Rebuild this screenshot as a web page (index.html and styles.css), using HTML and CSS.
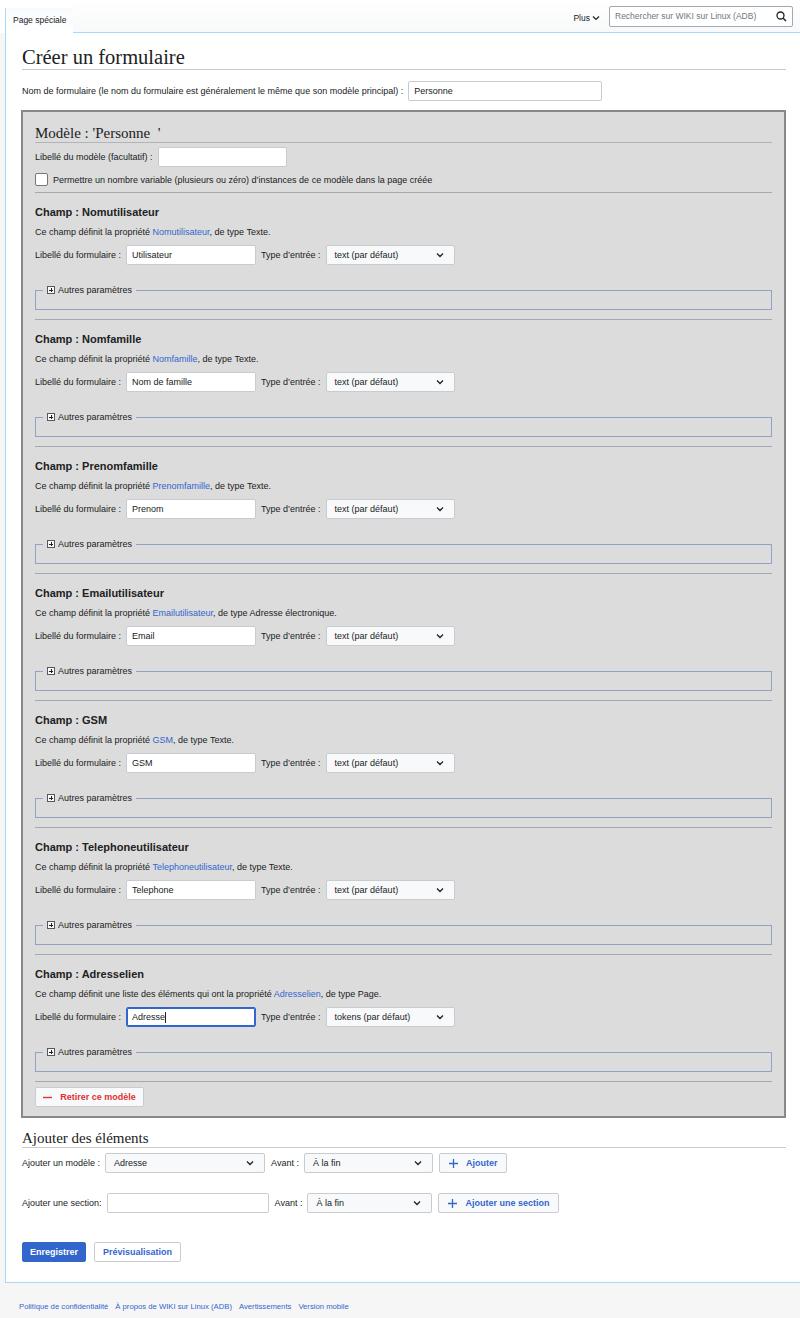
FILE: index.html
```html
<!DOCTYPE html>
<html lang="fr">
<head>
	<meta charset="UTF-8">
	<title>Créer un formulaire</title>
	<link rel="stylesheet" href="styles.css">
</head>
<body>
	<div class="head">
		<div class="tab">Page spéciale</div>
		<div class="head-rest">
			<span class="more">Plus <svg width="8" height="6" viewBox="0 0 8 6"><path d="M1 1.5 L4 4.5 L7 1.5" fill="none" stroke="#202122" stroke-width="1.2"/></svg></span>
			<div class="search">
				<span>Rechercher sur WIKI sur Linux (ADB)</span>
				<svg width="11" height="11" viewBox="0 0 11 11"><circle cx="4.5" cy="4.5" r="3.5" fill="none" stroke="#202122" stroke-width="1.3"/><path d="M7 7 L10 10" stroke="#202122" stroke-width="1.4"/></svg>
			</div>
		</div>
	</div>

	<div class="content">
		<h1>Créer un formulaire</h1>
		<div class="row form-name">
			<span>Nom de formulaire (le nom du formulaire est généralement le même que son modèle principal) :</span>
			<input type="text" class="ipt w-name" value="Personne">
		</div>

		<div class="tpl-box">
			<h2>Modèle : 'Personne&nbsp;&nbsp;'</h2>
			<div class="row tpl-label">
				<span>Libellé du modèle (facultatif) :</span>
				<input type="text" class="ipt w-tpl" value="">
			</div>
			<div class="row check-row">
				<span class="check"></span>
				<span>Permettre un nombre variable (plusieurs ou zéro) d’instances de ce modèle dans la page créée</span>
			</div>
			<hr>

			<div class="field">
				<h3>Champ : Nomutilisateur</h3>
				<p class="desc">Ce champ définit la propriété <a href="#">Nomutilisateur</a>, de type Texte.</p>
				<div class="row">
					<span>Libellé du formulaire :</span>
					<input type="text" class="ipt w-label" value="Utilisateur">
					<span class="type-label">Type d’entrée :</span>
					<div class="select w-type"><span>text (par défaut)</span><svg width="8" height="6" viewBox="0 0 8 6"><path d="M1 1.5 L4 4.5 L7 1.5" fill="none" stroke="#202122" stroke-width="1.3"/></svg></div>
				</div>
				<fieldset><legend><span class="plus"></span>Autres paramètres</legend></fieldset>
			</div>
			<hr>

			<div class="field">
				<h3>Champ : Nomfamille</h3>
				<p class="desc">Ce champ définit la propriété <a href="#">Nomfamille</a>, de type Texte.</p>
				<div class="row">
					<span>Libellé du formulaire :</span>
					<input type="text" class="ipt w-label" value="Nom de famille">
					<span class="type-label">Type d’entrée :</span>
					<div class="select w-type"><span>text (par défaut)</span><svg width="8" height="6" viewBox="0 0 8 6"><path d="M1 1.5 L4 4.5 L7 1.5" fill="none" stroke="#202122" stroke-width="1.3"/></svg></div>
				</div>
				<fieldset><legend><span class="plus"></span>Autres paramètres</legend></fieldset>
			</div>
			<hr>

			<div class="field">
				<h3>Champ : Prenomfamille</h3>
				<p class="desc">Ce champ définit la propriété <a href="#">Prenomfamille</a>, de type Texte.</p>
				<div class="row">
					<span>Libellé du formulaire :</span>
					<input type="text" class="ipt w-label" value="Prenom">
					<span class="type-label">Type d’entrée :</span>
					<div class="select w-type"><span>text (par défaut)</span><svg width="8" height="6" viewBox="0 0 8 6"><path d="M1 1.5 L4 4.5 L7 1.5" fill="none" stroke="#202122" stroke-width="1.3"/></svg></div>
				</div>
				<fieldset><legend><span class="plus"></span>Autres paramètres</legend></fieldset>
			</div>
			<hr>

			<div class="field">
				<h3>Champ : Emailutilisateur</h3>
				<p class="desc">Ce champ définit la propriété <a href="#">Emailutilisateur</a>, de type Adresse électronique.</p>
				<div class="row">
					<span>Libellé du formulaire :</span>
					<input type="text" class="ipt w-label" value="Email">
					<span class="type-label">Type d’entrée :</span>
					<div class="select w-type"><span>text (par défaut)</span><svg width="8" height="6" viewBox="0 0 8 6"><path d="M1 1.5 L4 4.5 L7 1.5" fill="none" stroke="#202122" stroke-width="1.3"/></svg></div>
				</div>
				<fieldset><legend><span class="plus"></span>Autres paramètres</legend></fieldset>
			</div>
			<hr>

			<div class="field">
				<h3>Champ : GSM</h3>
				<p class="desc">Ce champ définit la propriété <a href="#">GSM</a>, de type Texte.</p>
				<div class="row">
					<span>Libellé du formulaire :</span>
					<input type="text" class="ipt w-label" value="GSM">
					<span class="type-label">Type d’entrée :</span>
					<div class="select w-type"><span>text (par défaut)</span><svg width="8" height="6" viewBox="0 0 8 6"><path d="M1 1.5 L4 4.5 L7 1.5" fill="none" stroke="#202122" stroke-width="1.3"/></svg></div>
				</div>
				<fieldset><legend><span class="plus"></span>Autres paramètres</legend></fieldset>
			</div>
			<hr>

			<div class="field">
				<h3>Champ : Telephoneutilisateur</h3>
				<p class="desc">Ce champ définit la propriété <a href="#">Telephoneutilisateur</a>, de type Texte.</p>
				<div class="row">
					<span>Libellé du formulaire :</span>
					<input type="text" class="ipt w-label" value="Telephone">
					<span class="type-label">Type d’entrée :</span>
					<div class="select w-type"><span>text (par défaut)</span><svg width="8" height="6" viewBox="0 0 8 6"><path d="M1 1.5 L4 4.5 L7 1.5" fill="none" stroke="#202122" stroke-width="1.3"/></svg></div>
				</div>
				<fieldset><legend><span class="plus"></span>Autres paramètres</legend></fieldset>
			</div>
			<hr>

			<div class="field">
				<h3>Champ : Adresselien</h3>
				<p class="desc">Ce champ définit une liste des éléments qui ont la propriété <a href="#">Adresselien</a>, de type Page.</p>
				<div class="row">
					<span>Libellé du formulaire :</span>
					<div class="ipt w-label focus">Adresse<span class="caret"></span></div>
					<span class="type-label">Type d’entrée :</span>
					<div class="select w-type"><span>tokens (par défaut)</span><svg width="8" height="6" viewBox="0 0 8 6"><path d="M1 1.5 L4 4.5 L7 1.5" fill="none" stroke="#202122" stroke-width="1.3"/></svg></div>
				</div>
				<fieldset><legend><span class="plus"></span>Autres paramètres</legend></fieldset>
			</div>
			<hr>

			<div class="btn btn-remove"><svg width="9" height="9" viewBox="0 0 9 9"><path d="M0 4.5 H9" stroke="#d33" stroke-width="1.4"/></svg>Retirer ce modèle</div>
		</div>

		<h2 class="add-title">Ajouter des éléments</h2>
		<div class="row add-row">
			<span>Ajouter un modèle :</span>
			<div class="select w-add-tpl"><span>Adresse</span><svg width="8" height="6" viewBox="0 0 8 6"><path d="M1 1.5 L4 4.5 L7 1.5" fill="none" stroke="#202122" stroke-width="1.3"/></svg></div>
			<span class="avant">Avant :</span>
			<div class="select w-before"><span>À la fin</span><svg width="8" height="6" viewBox="0 0 8 6"><path d="M1 1.5 L4 4.5 L7 1.5" fill="none" stroke="#202122" stroke-width="1.3"/></svg></div>
			<div class="btn btn-add"><svg width="9" height="9" viewBox="0 0 9 9"><path d="M0 4.5 H9 M4.5 0 V9" stroke="#36c" stroke-width="1.3"/></svg>Ajouter</div>
		</div>
		<div class="row add-row section-row">
			<span>Ajouter une section:</span>
			<input type="text" class="ipt w-section" value="">
			<span class="avant">Avant :</span>
			<div class="select w-before2"><span>À la fin</span><svg width="8" height="6" viewBox="0 0 8 6"><path d="M1 1.5 L4 4.5 L7 1.5" fill="none" stroke="#202122" stroke-width="1.3"/></svg></div>
			<div class="btn btn-add"><svg width="9" height="9" viewBox="0 0 9 9"><path d="M0 4.5 H9 M4.5 0 V9" stroke="#36c" stroke-width="1.3"/></svg>Ajouter une section</div>
		</div>

		<div class="row save-row">
			<div class="btn btn-primary">Enregistrer</div>
			<div class="btn btn-preview">Prévisualisation</div>
		</div>
	</div>

	<div class="footer">
		<a href="#">Politique de confidentialité</a>
		<a href="#">À propos de WIKI sur Linux (ADB)</a>
		<a href="#">Avertissements</a>
		<a href="#">Version mobile</a>
	</div>
</body>
</html>
```

FILE: styles.css
```css
*{
	box-sizing: border-box;
	margin: 0;
	padding: 0;
}
body{
	background: #f6f6f6;
	font-family: "Liberation Sans", Arial, sans-serif;
	font-size: 9px;
	color: #202122;
}
a{
	color: #36c;
	text-decoration: none;
}

/* head */
.head{
	display: flex;
	height: 33px;
	background: #fff;
}
.tab{
	margin-left: 5px;
	margin-top: 8px;
	padding: 7px 7px 0;
	border-left: 1px solid #a7d7f9;
	background: linear-gradient(#f8fbfe, #fff);
	font-size: 8.5px;
}
.head-rest{
	flex: 1;
	display: flex;
	justify-content: flex-end;
	align-items: center;
	padding-right: 7px;
	border-bottom: 1px solid #a7d7f9;
	background: linear-gradient(#fff, #f8f9fa);
}
.more{
	display: flex;
	align-items: center;
	gap: 2px;
	margin-top: 3px;
	margin-right: 9px;
	font-size: 8.5px;
}
.search{
	width: 184px;
	height: 21px;
	display: flex;
	justify-content: space-between;
	align-items: center;
	padding: 0 5px;
	border: 1px solid #a2a9b1;
	border-radius: 2px;
	background: #fff;
	color: #72777d;
	font-size: 8.5px;
}

/* content */
.content{
	margin-left: 5px;
	border-left: 1px solid #a7d7f9;
	border-bottom: 1px solid #a7d7f9;
	background: #fff;
	padding: 12px 14px 20px 16px;
}
h1{
	font-family: "Liberation Serif", Georgia, serif;
	font-weight: normal;
	font-size: 20.5px;
	line-height: 24px;
	border-bottom: 1px solid #c8ccd1;
}
.row{
	display: flex;
	align-items: center;
	gap: 5px;
}
.form-name{
	margin-top: 11px;
}
.ipt{
	height: 20px;
	border: 1px solid #c8ccd1;
	border-radius: 2px;
	background: #fff;
	padding: 0 5px;
	font-family: "Liberation Sans", Arial, sans-serif;
	font-size: 9px;
	color: #202122;
	outline: none;
	display: flex;
	align-items: center;
}
.w-name{ width: 194px; }
.w-tpl{ width: 129px; }
.w-label{ width: 130px; }
.w-section{ width: 162px; }
.focus{
	border-color: #36c;
	box-shadow: inset 0 0 0 1px #36c;
}
.caret{
	width: 1px;
	height: 11px;
	background: #202122;
}
.select{
	height: 20px;
	display: flex;
	justify-content: space-between;
	align-items: center;
	padding: 0 10px 0 8px;
	border: 1px solid #c8ccd1;
	border-radius: 2px;
	background: #f8f9fa;
	font-size: 9px;
}
.w-type{ width: 129px; }
.w-add-tpl{ width: 160px; }
.w-before{ width: 129px; }
.w-before2{ width: 125px; }

/* template box */
.tpl-box{
	margin: 9px 0 0 -1px;
	border: 2px solid #888;
	background: #dcdcdc;
	padding: 12px 12px 9px;
}
h2{
	font-family: "Liberation Serif", Georgia, serif;
	font-weight: normal;
	font-size: 15px;
	line-height: 18px;
	border-bottom: 1px solid #b0b4ba;
}
.tpl-label{
	margin-top: 4px;
}
.check-row{
	margin-top: 6px;
	gap: 5px;
}
.check{
	width: 13px;
	height: 13px;
	border: 1px solid #72777d;
	border-radius: 2px;
	background: #fff;
}
hr{
	border: 0;
	height: 1px;
	background: #a2a9b1;
	margin-top: 6px;
}
.field h3{
	margin-top: 12px;
	font-size: 11px;
	line-height: 14px;
}
.desc{
	margin-top: 7px;
	line-height: 12px;
}
.field .row{
	margin-top: 7px;
}
fieldset{
	margin-top: 19px;
	border: 1px solid #93a2c4;
	padding: 0 0 13px;
	margin-bottom: 9px;
}
legend{
	margin-left: 7px;
	padding: 0 4px;
	line-height: 12px;
	display: flex;
	align-items: center;
	gap: 3px;
}
.plus{
	width: 8px;
	height: 8px;
	border: 1px solid #54595d;
	background:
		linear-gradient(#202122, #202122) center / 4px 1px no-repeat,
		linear-gradient(#202122, #202122) center / 1px 4px no-repeat,
		#f8f9fa;
}
.btn{
	height: 20px;
	display: inline-flex;
	align-items: center;
	justify-content: center;
	gap: 8px;
	border: 1px solid #c8ccd1;
	border-radius: 2px;
	background: #f8f9fa;
	font-weight: bold;
	font-size: 9px;
}
.btn-remove{
	margin-top: 5px;
	width: 109px;
	color: #d33;
}

/* add elements */
.add-title{
	margin-top: 11px;
	border-bottom-color: #c8ccd1;
}
.add-row{
	margin-top: 5px;
}
.section-row{
	margin-top: 20px;
}
.avant{
	margin-left: 1px;
}
.btn-add{
	color: #36c;
	padding: 0 9px;
	margin-left: 1px;
}
.save-row{
	margin-top: 29px;
	gap: 8px;
}
.btn-primary{
	width: 64px;
	background: #36c;
	border-color: #36c;
	color: #fff;
}
.btn-preview{
	width: 87px;
	background: #fff;
	color: #36c;
}

/* footer */
.footer{
	padding: 19px 0 20px 19px;
	display: flex;
	gap: 7px;
	font-size: 7.7px;
}
```
